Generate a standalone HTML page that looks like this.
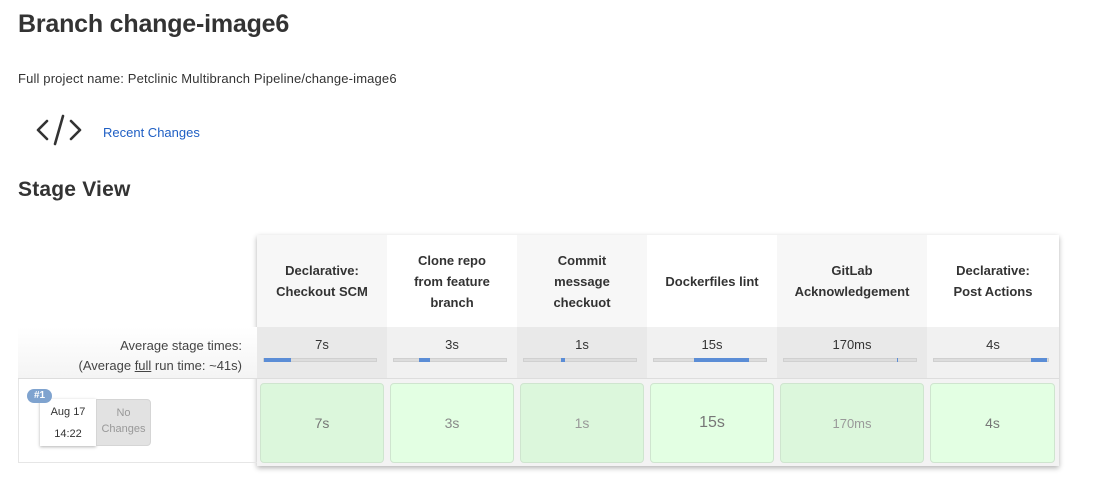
<!DOCTYPE html>
<html><head><meta charset="utf-8"><style>
*{box-sizing:border-box;margin:0;padding:0}
body{width:1101px;height:489px;background:#fff;font-family:"Liberation Sans",sans-serif;color:#333;position:relative;overflow:hidden}
.a{position:absolute}
h1{position:absolute;left:18px;top:10px;font-size:25px;font-weight:bold;color:#333;letter-spacing:-0.2px}
h2{position:absolute;left:18px;top:178px;font-size:21px;font-weight:bold;color:#333;letter-spacing:0.2px}
.hd{position:absolute;top:235px;height:92px;display:flex;align-items:center;justify-content:center;text-align:center;font-size:13px;font-weight:bold;line-height:21px;color:#333}
.av{position:absolute;top:327px;height:52px;font-size:13px;text-align:center;padding-top:10px;border-bottom:1px solid #ddd}
.bar{position:absolute;left:6px;right:10px;top:31px;height:4px;background:#ddd;border:1px solid #d0d0d0}
.bar i{position:absolute;top:-1px;height:4px;background:#5b8dd6}
.cell{position:absolute;top:383px;height:80px;border:1px solid #cfe5cf;border-radius:4px;display:flex;align-items:center;justify-content:center;color:#777;font-size:14px}
</style></head><body>
<h1>Branch change-image6</h1>
<div class="a" style="left:18px;top:71px;font-size:13px;letter-spacing:0.15px;color:#333">Full project name: Petclinic Multibranch Pipeline/change-image6</div>
<svg class="a" style="left:36px;top:114px" width="48" height="32" viewBox="0 0 48 32"><path d="M11 7 L2 16 L11 25 M35 7 L44 16 L35 25 M27 2 L19 30" stroke="#333" stroke-width="2.6" fill="none" stroke-linecap="round" stroke-linejoin="round"/></svg>
<div class="a" style="left:103px;top:125px;font-size:13px;color:#1f5fc4">Recent Changes</div>
<h2>Stage View</h2>

<div class="a" style="left:257px;top:235px;width:802px;height:231px;box-shadow:0 2px 5px rgba(0,0,0,.3);background:#f0f0f0"></div>
<div class="hd" style="left:257px;width:130px;background:#f7f7f7">Declarative:<br>Checkout SCM</div>
<div class="hd" style="left:387px;width:130px;background:#fff">Clone repo<br>from feature<br>branch</div>
<div class="hd" style="left:517px;width:130px;background:#f7f7f7">Commit<br>message<br>checkuot</div>
<div class="hd" style="left:647px;width:130px;background:#fff">Dockerfiles lint</div>
<div class="hd" style="left:777px;width:150px;background:#f7f7f7">GitLab<br>Acknowledgement</div>
<div class="hd" style="left:927px;width:132px;background:#fff">Declarative:<br>Post Actions</div>

<div class="av" style="left:257px;width:130px;background:#e9e9e9">7s<div class="bar"><i style="left:0;width:27px"></i></div></div>
<div class="av" style="left:387px;width:130px;background:#f1f1f1">3s<div class="bar"><i style="left:25px;width:11px"></i></div></div>
<div class="av" style="left:517px;width:130px;background:#e9e9e9">1s<div class="bar"><i style="left:37px;width:4px"></i></div></div>
<div class="av" style="left:647px;width:130px;background:#f1f1f1">15s<div class="bar"><i style="left:40px;width:55px"></i></div></div>
<div class="av" style="left:777px;width:150px;background:#e9e9e9">170ms<div class="bar"><i style="left:113px;width:1px"></i></div></div>
<div class="av" style="left:927px;width:132px;background:#f1f1f1">4s<div class="bar"><i style="left:97px;width:16px"></i></div></div>

<div class="a" style="left:257px;top:379px;width:802px;height:87px;background:#f3f3f3"></div>
<div class="cell" style="left:260px;width:124px;background:#dcf7dc">7s</div>
<div class="cell" style="left:390px;width:124px;background:#e3ffe3;color:#888">3s</div>
<div class="cell" style="left:520px;width:124px;background:#dcf7dc;color:#999">1s</div>
<div class="cell" style="left:650px;width:124px;background:#e3ffe3;font-size:16px">15s</div>
<div class="cell" style="left:780px;width:144px;background:#dcf7dc;color:#999;font-size:13px">170ms</div>
<div class="cell" style="left:930px;width:125px;background:#e3ffe3">4s</div>

<div class="a" style="left:18px;top:327px;width:239px;height:52px;background:linear-gradient(#fff,#f4f4f4);border-bottom:1px solid #ddd;text-align:right;padding-right:15px;font-size:13px;line-height:20px;padding-top:9px;color:#444">Average stage times:<br>(Average <u>full</u> run time: ~41s)</div>
<div class="a" style="left:18px;top:379px;width:239px;height:84px;border:1px solid #e6e6e6;border-top:none;border-right:none"></div>
<div class="a" style="left:40px;top:399px;width:56px;height:47px;background:#fff;box-shadow:0 1px 3px rgba(0,0,0,.3);font-size:11px;text-align:center;line-height:11px;padding-top:8px;color:#333">Aug 17<br><br>14:22</div>
<div class="a" style="left:96px;top:399px;width:55px;height:47px;background:#e2e2e2;border:1px solid #d5d5d5;border-radius:0 4px 4px 0;font-size:11px;text-align:center;color:#999;padding-top:5px;line-height:16px">No<br>Changes</div>
<div class="a" style="left:27px;top:389px;width:25px;height:14px;border-radius:8px;background:#7fa3cf;color:#fff;font-size:10px;font-weight:bold;text-align:center;line-height:14px">#1</div>
</body></html>
